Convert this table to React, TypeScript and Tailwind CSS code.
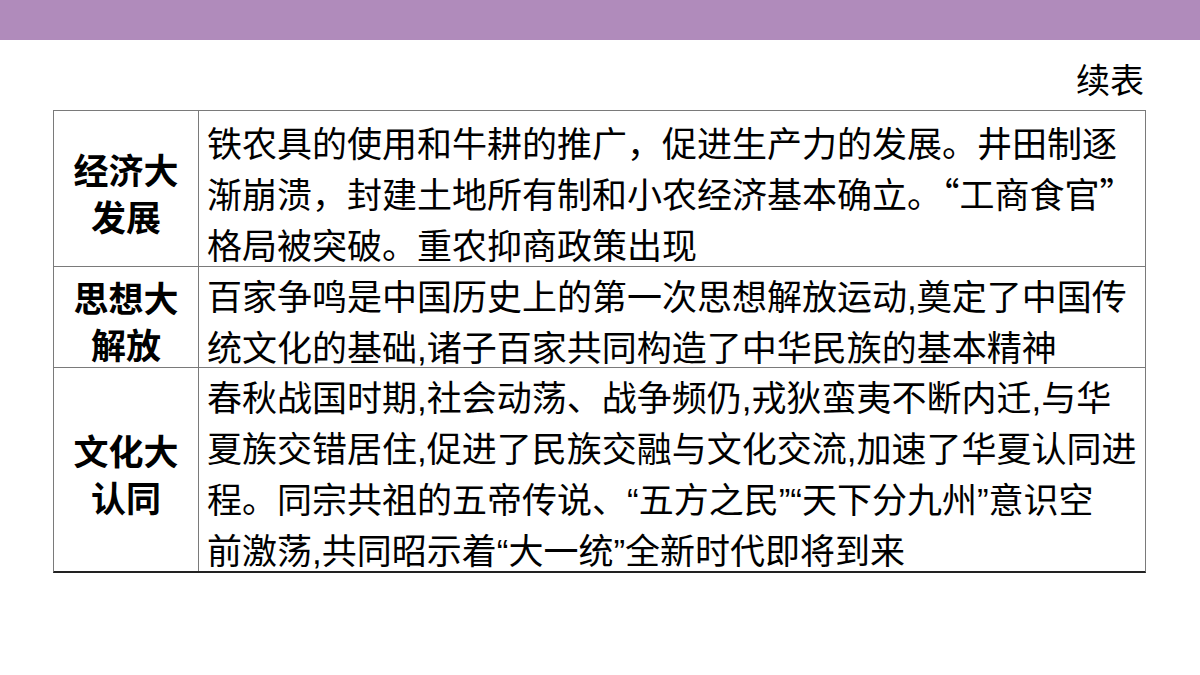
import React from 'react';

// One table row: a bold label cell and a body cell whose lines are laid out
// exactly as in the printed slide (explicit line breaks, no wrapping).
// `narrowPunct` rows use Latin quotes/commas (proportional) like the source.
interface Row {
  label: string[];
  lines: string[];
  height: number;
  narrowPunct?: boolean;
}

const ROWS: Row[] = [
  {
    label: ['经济大', '发展'],
    lines: [
      '铁农具的使用和牛耕的推广，促进生产力的发展。井田制逐',
      '渐崩溃，封建土地所有制和小农经济基本确立。“工商食官”',
      '格局被突破。重农抑商政策出现',
    ],
    height: 155,
  },
  {
    label: ['思想大', '解放'],
    lines: [
      '百家争鸣是中国历史上的第一次思想解放运动,奠定了中国传',
      '统文化的基础,诸子百家共同构造了中华民族的基本精神',
    ],
    height: 102,
    narrowPunct: true,
  },
  {
    label: ['文化大', '认同'],
    lines: [
      '春秋战国时期,社会动荡、战争频仍,戎狄蛮夷不断内迁,与华',
      '夏族交错居住,促进了民族交融与文化交流,加速了华夏认同进',
      '程。同宗共祖的五帝传说、“五方之民”“天下分九州”意识空',
      '前激荡,共同昭示着“大一统”全新时代即将到来',
    ],
    height: 205,
    narrowPunct: true,
  },
];

export default function App() {
  return (
    <div className="w-[1200px] h-[675px] bg-white text-black font-['Noto_Sans_CJK_SC','Noto_Sans',sans-serif] overflow-hidden">
      <div className="h-[40px] bg-[#b08bbb]" />

      <div className="h-[70px] pt-[14px] pr-[56px] text-right text-[34px] leading-[49px]">续表</div>

      <div className="ml-[53px] w-[1093px] border-t border-l border-r border-[#7a7a7a] border-b-2 border-b-[#222]">
        {ROWS.map((r, idx) => (
          <div
            key={idx}
            className={'flex ' + (idx > 0 ? 'border-t border-[#7a7a7a]' : '')}
            style={{ height: r.height - (idx > 0 ? 1 : 0) }}
          >
            <div className="w-[145px] shrink-0 border-r border-[#7a7a7a] flex flex-col items-center justify-center pt-[6px] text-[35px] leading-[47px] font-bold">
              {r.label.map((l) => (
                <div key={l}>{l}</div>
              ))}
            </div>
            <div
              className={
                'flex-1 pl-[8px] pt-[5px] text-[35px] leading-[51px] whitespace-nowrap ' +
                (r.narrowPunct ? "font-['Liberation_Sans','Noto_Sans_CJK_SC',sans-serif]" : '')
              }
            >
              {r.lines.map((l) => (
                <div key={l}>{l}</div>
              ))}
            </div>
          </div>
        ))}
      </div>
    </div>
  );
}
